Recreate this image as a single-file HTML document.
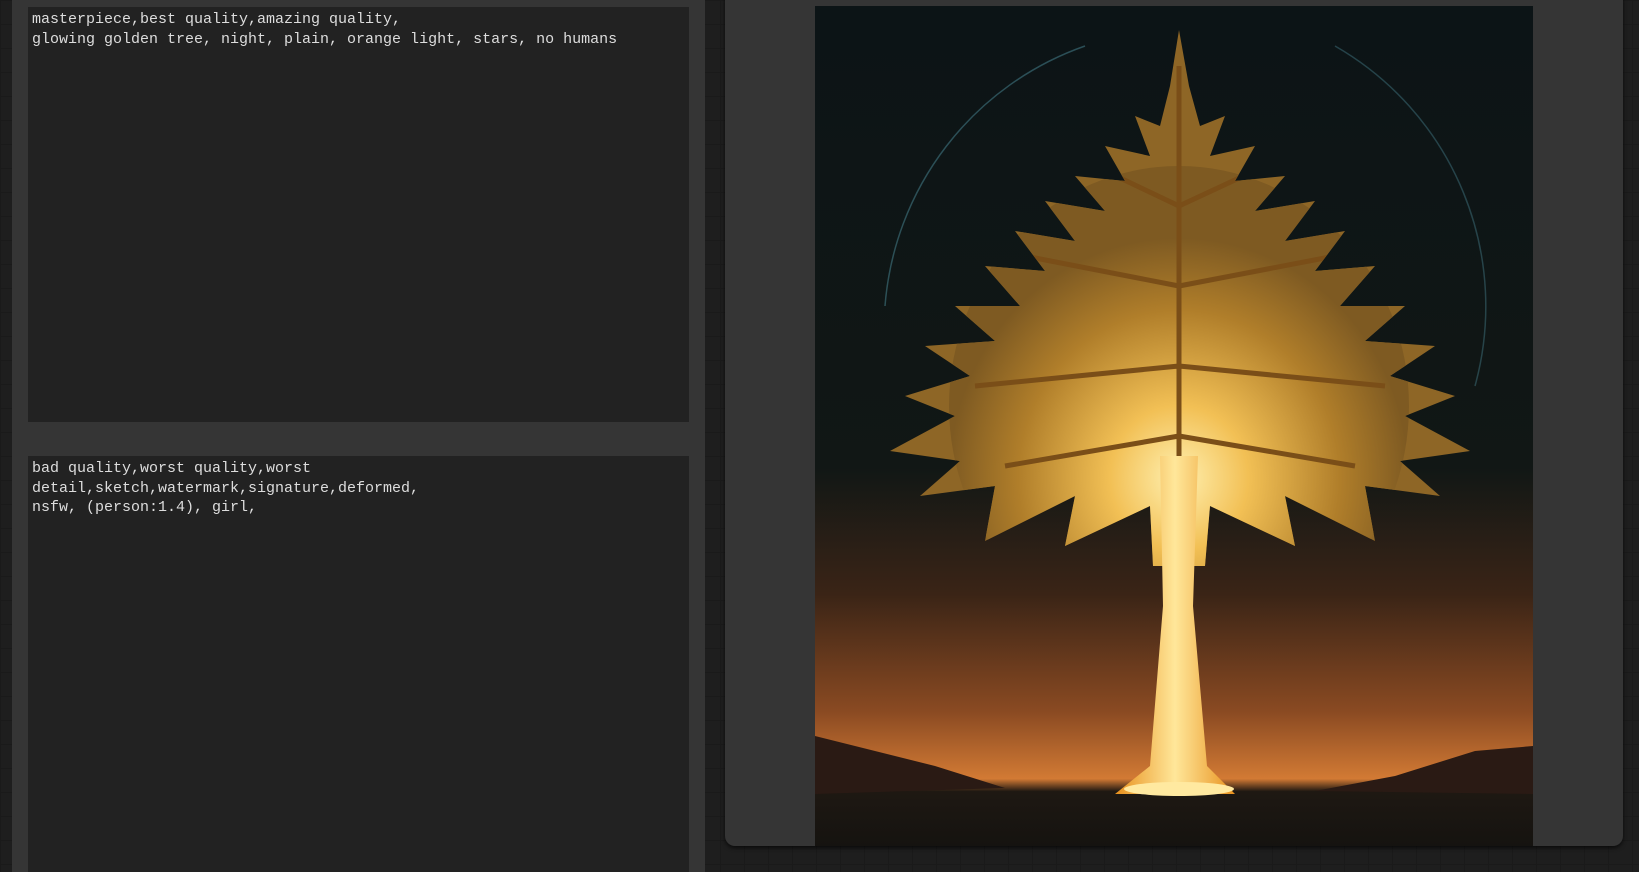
<!DOCTYPE html>
<html><head><style>
html,body{margin:0;padding:0;width:1639px;height:872px;overflow:hidden;background:#1e1e1e;
background-image:linear-gradient(#1a1a1a 1px,transparent 1px),linear-gradient(90deg,#1a1a1a 1px,transparent 1px);background-size:24px 24px;position:relative}
.lp{position:absolute;left:12px;top:0;width:693px;height:872px;background:#353535}
.ta{position:absolute;left:28px;width:661px;background:#222;color:#ddd;font:15px/19.5px "Liberation Mono",monospace;padding:3px 4px;box-sizing:border-box;white-space:pre}
.rp{position:absolute;left:725px;top:-10px;width:898px;height:856px;background:#353535;border-radius:10px;box-shadow:0 2px 4px #000a}
svg{position:absolute;left:815px;top:6px}
</style></head><body>
<div class="lp"></div>
<div class="ta" style="top:7px;height:415px">masterpiece,best quality,amazing quality,
glowing golden tree, night, plain, orange light, stars, no humans</div>
<div class="ta" style="top:456px;height:416px">bad quality,worst quality,worst
detail,sketch,watermark,signature,deformed,
nsfw, (person:1.4), girl,</div>
<div class="rp"></div>
<svg width="718" height="840" viewBox="0 0 718 840">
<defs>
<linearGradient id="sky" x1="0" y1="0" x2="0" y2="1">
<stop offset="0" stop-color="#0c1416"/><stop offset="0.55" stop-color="#111715"/>
<stop offset="0.7" stop-color="#3a2416"/><stop offset="0.84" stop-color="#8a4a22"/><stop offset="0.92" stop-color="#d27a34"/><stop offset="0.935" stop-color="#1e1812"/><stop offset="1" stop-color="#151310"/></linearGradient>
<radialGradient id="glow" cx="0.5" cy="0.65" r="0.5"><stop offset="0" stop-color="#fff0b0"/><stop offset="0.3" stop-color="#f2c055"/><stop offset="0.7" stop-color="#b07e2a"/><stop offset="1" stop-color="#7e5a22"/></radialGradient>
<linearGradient id="tr" x1="0" y1="0" x2="1" y2="0"><stop offset="0" stop-color="#e8901c"/><stop offset="0.5" stop-color="#ffe79a"/><stop offset="1" stop-color="#e8901c"/></linearGradient>
<clipPath id="fc"><path d="M364 24 L374 80 L385 120 L410 110 L395 150 L440 140 L420 175 L470 170 L440 205 L500 195 L470 235 L530 225 L500 265 L560 260 L525 300 L590 300 L550 335 L620 340 L575 370 L640 390 L590 410 L655 445 L585 455 L625 490 L550 480 L560 535 L470 490 L480 540 L395 500 L390 560 L338 560 L335 500 L250 540 L260 490 L170 535 L180 480 L105 490 L145 455 L75 445 L140 410 L90 390 L155 370 L110 340 L180 335 L140 300 L205 300 L170 260 L230 265 L200 225 L260 235 L230 195 L290 205 L260 170 L310 175 L290 140 L335 150 L320 110 L345 120 L355 80 Z"/></clipPath>
</defs>
<rect width="718" height="840" fill="url(#sky)"/>
<path d="M70 300 A300 300 0 0 1 270 40" fill="none" stroke="#4a8a98" stroke-width="1.5" opacity="0.5"/>
<path d="M520 40 A300 300 0 0 1 660 380" fill="none" stroke="#4a8a98" stroke-width="1.5" opacity="0.4"/>
<g clip-path="url(#fc)">
<rect width="718" height="600" fill="#8e6626"/>
<ellipse cx="364" cy="400" rx="230" ry="240" fill="url(#glow)"/>
<path d="M364 60 L364 470 M364 200 L280 160 M364 200 L450 160 M364 280 L210 250 M364 280 L520 250 M364 360 L160 380 M364 360 L570 380 M364 430 L190 460 M364 430 L540 460" stroke="#7a4e18" stroke-width="5" fill="none"/>
</g>
<path d="M345 450 L383 450 L378 600 L392 760 L420 788 L300 788 L335 760 L348 600 Z" fill="url(#tr)"/>
<path d="M0 730 L40 740 L120 760 L190 782 L0 788 Z" fill="#2a1a14"/>
<path d="M718 740 L660 745 L580 770 L500 785 L718 788 Z" fill="#2a1a14"/>
<ellipse cx="364" cy="783" rx="55" ry="7" fill="#ffe9a0"/>
</svg>
</body></html>
